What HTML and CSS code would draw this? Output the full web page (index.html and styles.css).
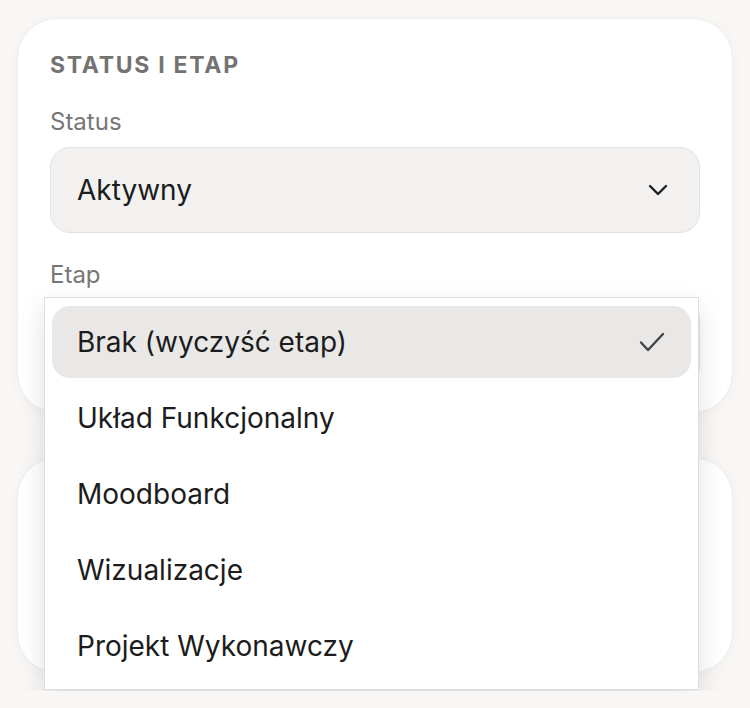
FILE: index.html
```html
<!DOCTYPE html>
<html lang="pl">
<head>
    <meta charset="UTF-8">
    <meta name="viewport" content="width=device-width, initial-scale=1.0">
    <title>Status i etap</title>
    <link rel="stylesheet" href="styles.css">
</head>
<body>
    <div class="page">
        <section class="card">
            <h2 class="card-title">Status i etap</h2>
            <div class="field">
                <label class="field-label">Status</label>
                <div class="select">
                    <span class="select-value">Aktywny</span>
                    <svg class="chevron" width="20" height="12" viewBox="0 0 20 12" fill="none">
                        <path d="M2 2l8 8 8-8" stroke="#1f1f1f" stroke-width="2.4" stroke-linecap="round" stroke-linejoin="round"/>
                    </svg>
                </div>
            </div>
            <div class="field field-stage">
                <label class="field-label">Etap</label>
                <div class="select">
                    <span class="select-value">Brak (wyczyść etap)</span>
                </div>
                <ul class="menu">
                    <li class="menu-item selected">
                        <span>Brak (wyczyść etap)</span>
                        <svg class="check" width="26" height="22" viewBox="0 0 26 22" fill="none">
                            <path d="M2 11.5l7 7.5L24 3" stroke="#444" stroke-width="2.4" stroke-linecap="round" stroke-linejoin="round"/>
                        </svg>
                    </li>
                    <li class="menu-item"><span>Układ Funkcjonalny</span></li>
                    <li class="menu-item"><span>Moodboard</span></li>
                    <li class="menu-item"><span>Wizualizacje</span></li>
                    <li class="menu-item"><span>Projekt Wykonawczy</span></li>
                </ul>
            </div>
        </section>
        <section class="card card-empty"></section>
    </div>
</body>
</html>
```

FILE: styles.css
```css
*{
    margin:0;
    padding:0;
    box-sizing: border-box;
}
body{
    background: #f8f7f5;
    font-family: 'Inter', 'Noto Sans', sans-serif;
    color: #1c1c1c;
}
.page{
    display: flex;
    flex-direction: column;
    gap: 44px;
    padding: 18px 17px;
}
.card{
    background: #fff;
    border: 1px solid #efedea;
    border-radius: 40px;
    box-shadow: 0px 2px 14px rgba(0,0,0,0.03);
    padding: 32px 32px 26px;
}
.card-empty{
    height: 216px;
}
.card-title{
    font-size: 23px;
    line-height: 28px;
    font-weight: 700;
    letter-spacing: 0.075em;
    text-transform: uppercase;
    color: #747372;
    margin-bottom: 28px;
}
.field{
    display: flex;
    flex-direction: column;
}
.field-stage{
    position: relative;
    margin-top: 27px;
}
.field-label{
    font-size: 24px;
    line-height: 30px;
    color: #777674;
    margin-bottom: 10px;
}
.select{
    display: flex;
    align-items: center;
    justify-content: space-between;
    height: 86px;
    padding: 0 31px 0 26px;
    background: #f2f1ef;
    border: 1.5px solid #e5e3e0;
    border-radius: 20px;
}
.select-value{
    font-size: 28px;
    color: #1c1c1c;
}
/* dropdown lying over the rest of the page */
.menu{
    position: absolute;
    top: 37px;
    left: -6px;
    width: 655px;
    list-style: none;
    background: #fff;
    border: 1px solid #dfdedc;
    box-shadow: 0px 10px 24px rgba(0,0,0,0.12);
    padding: 8px 7px 7px;
    display: flex;
    flex-direction: column;
    gap: 4px;
    z-index: 2;
}
.menu-item{
    display: flex;
    align-items: center;
    justify-content: space-between;
    height: 72px;
    padding: 0 26px 0 25px;
    border-radius: 18px;
    font-size: 28px;
    color: #1c1c1c;
}
.menu-item.selected{
    background: #e9e8e6;
}
```
